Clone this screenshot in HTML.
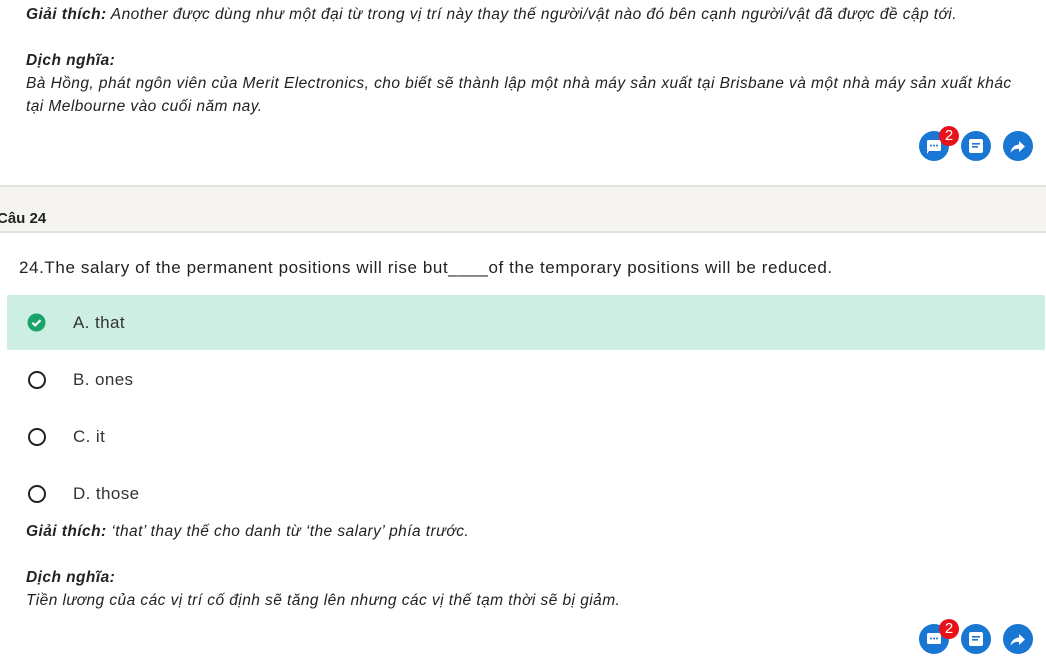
<!DOCTYPE html>
<html><head><meta charset="utf-8"><style>
body{margin:0;width:1046px;height:654px;overflow:hidden;background:#fff;font-family:"Liberation Sans",Arial,sans-serif;color:#222;position:relative}
.a{position:absolute;white-space:nowrap}
.it{font-style:italic;font-size:15.5px;color:#222;letter-spacing:0.44px}
.q{font-size:17px;color:#222;letter-spacing:0.6px}
.opt{font-size:17px;color:#333;letter-spacing:0.4px}
.rad{position:absolute;width:14px;height:14px;border:2px solid #222;border-radius:50%}
.btn{position:absolute;width:30px;height:30px;border-radius:50%;background:#1976d2}
.badge{position:absolute;width:20px;height:20px;border-radius:50%;background:#e8121b;color:#fff;font-size:15px;text-align:center;line-height:20px}
</style></head><body>
<div class="a it" style="left:26px;top:6px"><b>Giải thích:</b> Another được dùng như một đại từ trong vị trí này thay thế người/vật nào đó bên cạnh người/vật đã được đề cập tới.</div>
<div class="a it" style="left:26px;top:52px"><b>Dịch nghĩa:</b></div>
<div class="a it" style="left:26px;top:75px">Bà Hồng, phát ngôn viên của Merit Electronics, cho biết sẽ thành lập một nhà máy sản xuất tại Brisbane và một nhà máy sản xuất khác</div>
<div class="a it" style="left:26px;top:98px">tại Melbourne vào cuối năm nay.</div>

<div class="btn" style="left:919px;top:131px"><svg width="30" height="30"><rect x="8" y="9" width="14" height="11" rx="1.5" fill="#fff"/><path d="M10 20l-2 3v-3z" fill="#fff"/><circle cx="12" cy="14.5" r="1" fill="#1976d2"/><circle cx="15" cy="14.5" r="1" fill="#1976d2"/><circle cx="18" cy="14.5" r="1" fill="#1976d2"/></svg></div>
<div class="badge" style="left:939px;top:126px">2</div>
<div class="btn" style="left:961px;top:131px"><svg width="30" height="30"><rect x="8" y="8" width="14" height="14" rx="2" fill="#fff"/><rect x="11" y="12" width="8" height="1.6" fill="#1976d2"/><rect x="11" y="15" width="6" height="1.6" fill="#1976d2"/></svg></div>
<div class="btn" style="left:1003px;top:131px"><svg width="30" height="30"><path d="M16 10l6 5.5-6 5.5v-3.3c-4 0-6.5 1.2-8.5 4 .8-4.3 3-7.5 8.5-8.2z" fill="#fff"/></svg></div>

<div class="a" style="left:0;top:185px;width:1046px;height:44px;background:#f5f4f0;border-top:2px solid #e2e2e0;border-bottom:2px solid #e2e2e0"></div>
<div class="a" style="left:-3px;top:210px;font-size:15px;font-weight:bold;color:#222">Câu 24</div>

<div class="a q" style="left:19px;top:258px">24.The salary of the permanent positions will rise but____of the temporary positions will be reduced.</div>

<div class="a" style="left:7px;top:295px;width:1038px;height:55px;background:#cceee3;border-radius:2px"></div>
<svg class="a" style="left:27px;top:313px" width="19" height="19"><circle cx="9.5" cy="9.5" r="9" fill="#1aa36b"/><path d="M5.5 9.8l2.7 2.6 5.3-5.2" stroke="#fff" stroke-width="2.2" fill="none"/></svg>
<div class="a opt" style="left:73px;top:313px">A. that</div>
<div class="rad" style="left:28px;top:371px"></div><div class="a opt" style="left:73px;top:370px">B. ones</div>
<div class="rad" style="left:28px;top:428px"></div><div class="a opt" style="left:73px;top:427px">C. it</div>
<div class="rad" style="left:28px;top:485px"></div><div class="a opt" style="left:73px;top:484px">D. those</div>

<div class="a it" style="left:26px;top:523px"><b>Giải thích:</b> ‘that’ thay thế cho danh từ ‘the salary’ phía trước.</div>
<div class="a it" style="left:26px;top:569px"><b>Dịch nghĩa:</b></div>
<div class="a it" style="left:26px;top:592px">Tiền lương của các vị trí cố định sẽ tăng lên nhưng các vị thế tạm thời sẽ bị giảm.</div>

<div class="btn" style="left:919px;top:624px"><svg width="30" height="30"><rect x="8" y="9" width="14" height="11" rx="1.5" fill="#fff"/><circle cx="12" cy="14.5" r="1" fill="#1976d2"/><circle cx="15" cy="14.5" r="1" fill="#1976d2"/><circle cx="18" cy="14.5" r="1" fill="#1976d2"/></svg></div>
<div class="badge" style="left:939px;top:619px">2</div>
<div class="btn" style="left:961px;top:624px"><svg width="30" height="30"><rect x="8" y="8" width="14" height="14" rx="2" fill="#fff"/><rect x="11" y="12" width="8" height="1.6" fill="#1976d2"/><rect x="11" y="15" width="6" height="1.6" fill="#1976d2"/></svg></div>
<div class="btn" style="left:1003px;top:624px"><svg width="30" height="30"><path d="M16 10l6 5.5-6 5.5v-3.3c-4 0-6.5 1.2-8.5 4 .8-4.3 3-7.5 8.5-8.2z" fill="#fff"/></svg></div>
</body></html>
